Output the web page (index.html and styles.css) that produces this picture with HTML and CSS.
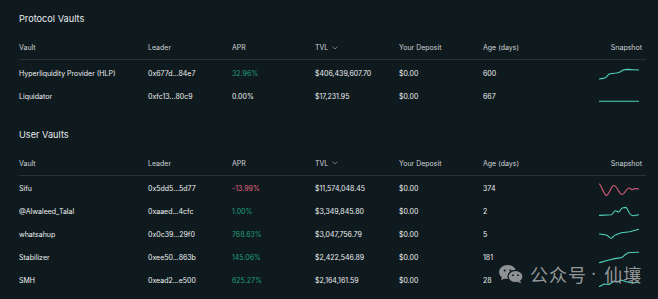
FILE: index.html
```html
<!DOCTYPE html>
<html lang="en">
<head>
    <meta charset="UTF-8">
    <meta name="viewport" content="width=device-width, initial-scale=1.0">
    <title>Vaults</title>
    <link rel="stylesheet" href="styles.css">
</head>
<body>

    <div class="page">

        <!-- Protocol Vaults -->
        <section class="vault-section">
            <h2 class="section-title">Protocol Vaults</h2>
            <div class="vault-row vault-head">
                <span>Vault</span>
                <span>Leader</span>
                <span>APR</span>
                <span class="sortable">TVL
                    <svg class="chevron" viewBox="0 0 6 4" width="6" height="4"><path d="M0.6 0.7 L3 3 L5.4 0.7" fill="none" stroke="#8a9397" stroke-width="0.8"/></svg>
                </span>
                <span>Your Deposit</span>
                <span>Age (days)</span>
                <span class="snap-head">Snapshot</span>
            </div>
            <div class="vault-list">
                <div class="vault-row">
                    <span>Hyperliquidity Provider (HLP)</span>
                    <span>0x677d...84e7</span>
                    <span class="up">32.96%</span>
                    <span>$406,439,607.70</span>
                    <span>$0.00</span>
                    <span>600</span>
                    <svg class="spark" viewBox="0 0 40 18" width="40" height="18"><path class="teal" d="M0 15 L4 14.4 L7 13.4 L9 11 L11 9.7 L17.7 9 L21 8 L23.5 6.3 L26 5.6 L29.3 5.4 L34.3 5.7 L40 6"/></svg>
                </div>
                <div class="vault-row">
                    <span>Liquidator</span>
                    <span>0xfc13...80c9</span>
                    <span>0.00%</span>
                    <span>$17,231.95</span>
                    <span>$0.00</span>
                    <span>667</span>
                    <svg class="spark" viewBox="0 0 40 18" width="40" height="18"><path class="teal" d="M0 14.3 L40 14.3"/></svg>
                </div>
            </div>
        </section>

        <!-- User Vaults -->
        <section class="vault-section user">
            <h2 class="section-title">User Vaults</h2>
            <div class="vault-row vault-head">
                <span>Vault</span>
                <span>Leader</span>
                <span>APR</span>
                <span class="sortable">TVL
                    <svg class="chevron" viewBox="0 0 6 4" width="6" height="4"><path d="M0.6 0.7 L3 3 L5.4 0.7" fill="none" stroke="#8a9397" stroke-width="0.8"/></svg>
                </span>
                <span>Your Deposit</span>
                <span>Age (days)</span>
                <span class="snap-head">Snapshot</span>
            </div>
            <div class="vault-list">
                <div class="vault-row">
                    <span>Sifu</span>
                    <span>0x5dd5...5d77</span>
                    <span class="down">-13.99%</span>
                    <span>$11,574,048.45</span>
                    <span>$0.00</span>
                    <span>374</span>
                    <svg class="spark" viewBox="0 0 40 18" width="40" height="18"><path class="red" d="M0.5 4 C3 7, 5 15, 7.3 15.4 C10 15.4, 12 5.5, 15 5.5 C18 5.5, 20 14.5, 23 14.5 C26 14.5, 27 8, 30 8 C31.5 8, 32 9.7, 33 9.7 C34.5 9.7, 35 8.5, 36 8.5 L40 9"/></svg>
                </div>
                <div class="vault-row">
                    <span>@Alwaleed_Talal</span>
                    <span>0xaaed...4cfc</span>
                    <span class="up">1.00%</span>
                    <span>$3,349,845.80</span>
                    <span>$0.00</span>
                    <span>2</span>
                    <svg class="spark" viewBox="0 0 40 18" width="40" height="18"><path class="teal" d="M0.5 12.4 L12.3 11.7 C14 11.5, 15 7.7, 16.3 7.7 C18 7.7, 18.5 9, 19.7 9 C21 9, 22 5, 23.3 5 L26.7 4.4 C28.5 4.4, 29.5 10, 30.7 10.5 C32 12.5, 33 12.7, 34 12.7 L40 11.7"/></svg>
                </div>
                <div class="vault-row">
                    <span>whatsahup</span>
                    <span>0x0c39...29f0</span>
                    <span class="up">768.63%</span>
                    <span>$3,047,756.79</span>
                    <span>$0.00</span>
                    <span>5</span>
                    <svg class="spark" viewBox="0 0 40 18" width="40" height="18"><path class="teal" d="M0.5 8 L7.3 9 C9.5 10, 11 12.3, 12.3 12.3 C13.5 12.3, 14.5 9.5, 16.3 9 L22.3 6.7 L30.7 5.7 L40 3.3"/></svg>
                </div>
                <div class="vault-row">
                    <span>Stabilizer</span>
                    <span>0xee50...863b</span>
                    <span class="up">145.06%</span>
                    <span>$2,422,546.89</span>
                    <span>$0.00</span>
                    <span>181</span>
                    <svg class="spark" viewBox="0 0 40 18" width="40" height="18"><path class="teal" d="M0.5 14.6 L9 12.3 L15.7 10.6 L22.3 9.6 C24 9, 25 7.5, 26.5 6.5 C28 5.3, 29 4.6, 30.7 4.5 L40 4.3"/></svg>
                </div>
                <div class="vault-row">
                    <span>SMH</span>
                    <span>0xead2...e500</span>
                    <span class="up">625.27%</span>
                    <span>$2,164,161.59</span>
                    <span>$0.00</span>
                    <span>28</span>
                    <svg class="spark" viewBox="0 0 40 18" width="40" height="18"><path class="teal" d="M0.5 15.4 L5 13 L10 13.5 L15 10 L18 11 L22 9 L28 11 L34 12 L40 11"/></svg>
                </div>
            </div>
        </section>
    </div>

    <!-- Watermark -->
    <div class="watermark">
        <svg class="wechat" viewBox="0 0 27 20" width="26" height="20">
            <ellipse cx="10" cy="8" rx="9" ry="7.3" fill="#8f9293"/>
            <path d="M4 13 L3.2 16.4 L7.5 14.4 Z" fill="#8f9293"/>
            <circle cx="7" cy="6.3" r="1.1" fill="#0f1a1f"/>
            <circle cx="12.8" cy="6.3" r="1.1" fill="#0f1a1f"/>
            <ellipse cx="18.2" cy="12.6" rx="7.8" ry="6.4" fill="#8f9293" stroke="#0f1a1f" stroke-width="1.3"/>
            <path d="M22.8 17 L24.2 19.6 L20.2 18.2 Z" fill="#8f9293"/>
            <circle cx="15.6" cy="11.2" r="1" fill="#0f1a1f"/>
            <circle cx="20.8" cy="11.2" r="1" fill="#0f1a1f"/>
        </svg>
        <span class="wm-text">公众号</span>
        <span class="wm-dot">·</span>
        <span class="wm-text">仙壤</span>
    </div>

</body>
</html>
```

FILE: styles.css
```css
/* General Styling */
body {
    font-family: Inter, "Noto Sans", sans-serif;
    background-color: #0f1a1f;
    color: #eef0f0;
    margin: 0;
    padding: 0;
    height: 299px;
    overflow: hidden;
    position: relative;
}

.page {
    padding: 12px 12px 0 19px;
}

/* Section titles */
.section-title {
    margin: 0 0 10px 0;
    font-size: 9.2px;
    line-height: 14px;
    font-weight: 400;
    color: #e6e9ea;
}

.vault-section.user {
    margin-top: 20px;
}

/* Rows */
.vault-row {
    display: grid;
    grid-template-columns: 129px 84px 83px 84px 84px 1fr auto;
    align-items: center;
    height: 22.8px;
    font-size: 7px;
    white-space: nowrap;
}

.vault-head {
    box-sizing: border-box;
    height: 24px;
    border-bottom: 1px solid #273237;
    color: #cfd3d5;
}

.vault-list {
    padding-top: 2px;
}

.sortable {
    display: flex;
    align-items: center;
    gap: 4px;
}

.snap-head {
    padding-right: 4px;
}

.up {
    color: #1f9f7a;
}

.down {
    color: #e0637f;
}

/* Sparklines */
.spark {
    display: block;
    margin-right: 7px;
}

.spark path {
    fill: none;
    stroke-width: 1.1;
    stroke-linejoin: round;
    stroke-linecap: round;
}

.spark .teal {
    stroke: #4fd1bc;
}

.spark .red {
    stroke: #d9607c;
}

/* Watermark */
.watermark {
    position: absolute;
    left: 498px;
    top: 264px;
    display: flex;
    align-items: center;
    color: #959899;
    font-family: "Noto Sans CJK SC", sans-serif;
    font-size: 18px;
    line-height: 20px;
}

.wechat {
    margin-right: 6px;
}

.wm-text {
    letter-spacing: 1px;
}

.wm-dot {
    font-family: Inter, sans-serif;
    margin: 0 8px 0 4px;
}
```
